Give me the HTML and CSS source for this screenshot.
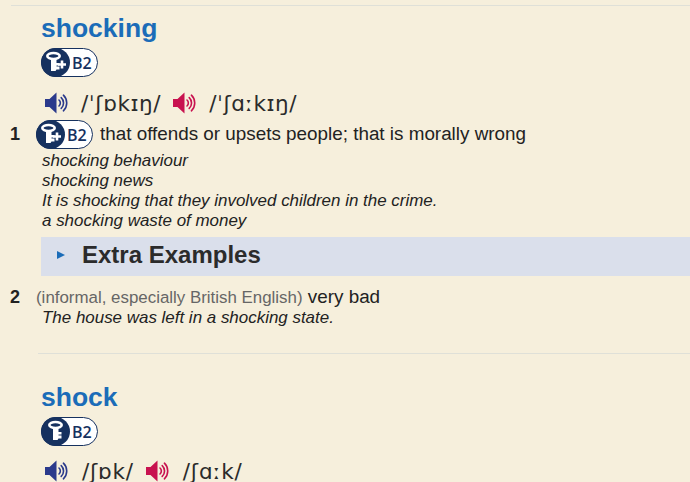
FILE: index.html
```html
<!DOCTYPE html>
<html lang="en">
<head>
<meta charset="utf-8">
<title>shocking</title>
<link rel="stylesheet" href="styles.css">
</head>
<body>
<svg class="defs" width="0" height="0" aria-hidden="true">
  <defs>
    <g id="speaker">
      <path d="M0 7H4.5L11.5 .5V21.5L4.5 15H0Z" fill="currentColor"/>
      <path d="M14 8a4 4 0 0 1 0 6M16.2 5.6a7.4 7.4 0 0 1 0 10.8M18.4 3.2a10.8 10.8 0 0 1 0 15.6" fill="none" stroke="currentColor" stroke-width="1.6" stroke-linecap="round"/>
    </g>
    <g id="key">
      <ellipse cx="12.5" cy="8" rx="6.2" ry="3" fill="none" stroke="#fff" stroke-width="2.6"/>
      <path d="M10 11h5.5v4h3v2.4h-3v1.2h3v2.8h-3l-1 1.6h-4.500z" fill="#fff"/>
    </g>
    <g id="keyplus">
      <use href="#key"/>
      <path d="M21 12.500v8M17 16.500h8" stroke="#fff" stroke-width="2.6"/>
    </g>
  </defs>
</svg>
<main class="entry">
  <section class="head">
    <h1 class="word">shocking</h1>
    <div class="badge-row">
      <span class="badge">
        <span class="badge-key"><svg width="29" height="29" viewBox="0 0 29 29"><use href="#keyplus"/></svg></span>
        <span class="badge-level">B2</span>
      </span>
    </div>
    <div class="phon-row">
      <svg class="speaker uk" width="23" height="22" viewBox="0 0 23 22"><use href="#speaker"/></svg>
      <span class="phon">/ˈʃɒkɪŋ/</span>
      <svg class="speaker us" width="23" height="22" viewBox="0 0 23 22"><use href="#speaker"/></svg>
      <span class="phon">/ˈʃɑːkɪŋ/</span>
    </div>
  </section>
  <ol class="senses">
    <li class="sense">
      <div class="sense-line">
        <span class="num">1</span>
        <span class="badge">
          <span class="badge-key"><svg width="29" height="29" viewBox="0 0 29 29"><use href="#keyplus"/></svg></span>
          <span class="badge-level">B2</span>
        </span>
        <span class="def">that offends or upsets people; that is morally wrong</span>
      </div>
      <ul class="examples">
        <li>shocking behaviour</li>
        <li>shocking news</li>
        <li>It is shocking that they involved children in the crime.</li>
        <li>a shocking waste of money</li>
      </ul>
      <div class="extra">
        <span class="extra-arrow"></span>
        <span class="extra-title">Extra Examples</span>
      </div>
    </li>
    <li class="sense second">
      <div class="sense-line">
        <span class="num">2</span>
        <span class="def"><span class="label">(informal, especially British English)</span> very bad</span>
      </div>
      <ul class="examples">
        <li>The house was left in a shocking state.</li>
      </ul>
    </li>
  </ol>
  <hr class="rule">
  <section class="head">
    <h1 class="word">shock</h1>
    <div class="badge-row">
      <span class="badge">
        <span class="badge-key"><svg width="29" height="29" viewBox="0 0 29 29"><g transform="translate(2 0)"><use href="#key"/></g></svg></span>
        <span class="badge-level">B2</span>
      </span>
    </div>
    <div class="phon-row">
      <svg class="speaker uk" width="23" height="22" viewBox="0 0 23 22"><use href="#speaker"/></svg>
      <span class="phon">/ʃɒk/</span>
      <svg class="speaker us" width="23" height="22" viewBox="0 0 23 22"><use href="#speaker"/></svg>
      <span class="phon">/ʃɑːk/</span>
    </div>
  </section>
</main>
</body>
</html>
```
FILE: styles.css
```css
* { box-sizing: border-box; }
html, body { margin: 0; padding: 0; }
body {
  width: 690px;
  height: 482px;
  overflow: hidden;
  background: #f6efdc;
  color: #222;
  font-family: "Liberation Sans", Arial, sans-serif;
}
.defs { position: absolute; }
.entry {
  margin-left: 11px;
  padding-top: 5px;
  background: linear-gradient(#dfe0d8, #dfe0d8) 0 5px / 100% 1px no-repeat;
}
.head { padding-left: 30px; }
.word {
  margin: 0;
  padding-top: 7px;
  font-size: 26.5px;
  line-height: 32px;
  font-weight: 700;
  color: #1b6cb8;
}
.badge-row { display: flex; margin-top: 4px; height: 29px; }
.badge {
  display: inline-flex;
  flex: none;
  align-items: center;
  position: relative;
  width: 57px;
  height: 29px;
  padding-left: 30px;
  border: 1.5px solid #16315f;
  border-radius: 15px;
  background: #fff;
}
.badge-key {
  position: absolute;
  left: -1.5px;
  top: -1.5px;
  width: 29px;
  height: 29px;
  border-radius: 50%;
  background: #16315f;
}
.badge-key svg { display: block; }
.badge-level {
  font-family: "Open Sans", sans-serif;
  font-size: 16px;
  font-weight: 600;
  color: #16315f;
}
.phon-row {
  display: flex;
  align-items: center;
  height: 28px;
  margin-top: 12px;
  padding-left: 4px;
}
.speaker { flex: none; }
.speaker.uk { color: #2b3a8c; }
.speaker.us { color: #c8124f; }
.phon {
  margin: 0 12px 0 13px;
  font-family: "DejaVu Sans", sans-serif;
  font-size: 21.5px;
  letter-spacing: 0.6px;
  color: #2b2b2b;
}
.senses { list-style: none; margin: 0; padding: 0; }
.sense { margin: 3px 0 0; }
.sense-line {
  display: flex;
  align-items: center;
  min-height: 29px;
  font-size: 18.85px;
}
.num {
  flex: none;
  width: 26px;
  margin-left: -1px;
  font-weight: 700;
  font-size: 18px;
  color: #222;
}
.sense-line .badge { margin-right: 7px; }
.def { margin-top: -2px; color: #222; }
.label { color: #666; font-size: 16.9px; }
.examples {
  list-style: none;
  margin: 2px 0 0;
  padding: 0 0 0 31px;
  font-size: 16.95px;
  line-height: 20px;
  font-style: italic;
  color: #222;
}
.extra {
  display: flex;
  align-items: center;
  height: 39px;
  margin: 6px 0 0 30px;
  padding: 0 0 3px 16px;
  background: #dadfeb;
}
.extra-arrow {
  width: 0;
  height: 0;
  border-left: 8px solid #1b6cb8;
  border-top: 4px solid transparent;
  border-bottom: 4px solid transparent;
}
.extra-title {
  margin-left: 17px;
  font-size: 24px;
  font-weight: 700;
  color: #2b2b2b;
}
.second { margin-top: 11px; }
.second .sense-line { min-height: 20px; }
.second .examples { margin-top: 0; }
.rule {
  height: 1px;
  margin: 25px 0 0 27px;
  border: 0;
  background: #dfe0d8;
}
.rule + .head .word { padding-top: 27px; }
.rule + .head .phon-row { margin-top: 11px; }
.rule + .head .phon { letter-spacing: 0.8px; margin-left: 14px; }
```
